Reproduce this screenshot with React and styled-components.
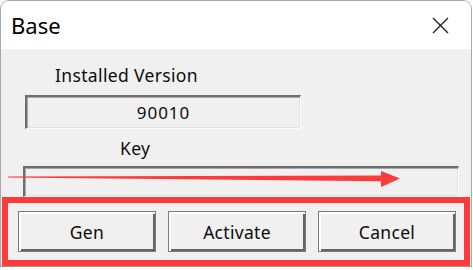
import React from "react";
import styled, { createGlobalStyle } from "styled-components";

const Global = createGlobalStyle`
  html, body { margin: 0; padding: 0; }
  body {
    width: 473px;
    height: 270px;
    overflow: hidden;
    background: #ffffff;
    font-family: "Noto Sans", "Liberation Sans", sans-serif;
  }
`;

const Window = styled.div`
  position: relative;
  width: 472px;
  box-sizing: border-box;
  border: 1.5px solid #a9a9a9;
  border-bottom: 1px solid #9a9a9a;
  border-radius: 9px 9px 0 0;
  overflow: hidden;
  background: #f0f0f0;
`;

const TitleBar = styled.div`
  height: 48px;
  background: #ffffff;
  display: flex;
  align-items: center;
  justify-content: space-between;
  padding: 0 22px 0 10px;
`;

const Title = styled.span`
  font-size: 22px;
  line-height: 28px;
  color: #000;
`;

const Body = styled.div`
  display: flex;
  flex-direction: column;
  padding-top: 16px;
`;

const Label = styled.div`
  font-size: 17.5px;
  line-height: 20px;
  color: #0d0d0d;
  letter-spacing: 0.35px;
  margin-left: ${(p) => p.$left}px;
  margin-top: ${(p) => p.$top || 0}px;
`;

const Sunken = styled.div`
  box-sizing: border-box;
  margin-left: ${(p) => p.$left}px;
  margin-top: ${(p) => p.$top}px;
  width: ${(p) => p.$width}px;
  height: ${(p) => p.$height}px;
  border-style: solid;
  border-width: 2px 1.5px 1.5px 2px;
  border-color: #6e6e6e #fbfbfb #fbfbfb #6e6e6e;
  box-shadow: inset 1px 1px 0 #a8a8a8, inset -1px -1px 0 #e2e2e2;
  background: #f0f0f0;
  display: flex;
  align-items: center;
  justify-content: center;
  font-size: 17px;
  letter-spacing: 1px;
  color: #0d0d0d;
`;

const ButtonBar = styled.div`
  margin: 0 1px;
  border: 6px solid #fd3a3a;
  display: flex;
  gap: 12px;
  padding: 8px 7px 8px 10px;
`;

const Button = styled.button`
  box-sizing: border-box;
  width: 138px;
  height: 41px;
  background: #f0f0f0;
  border: 1px solid #7a7a7a;
  box-shadow: inset 2px 2px 0 #ffffff, inset -2px -2px 0 #646464;
  font-family: "Noto Sans", "Liberation Sans", sans-serif;
  font-size: 17.5px;
  letter-spacing: 0.3px;
  color: #0d0d0d;
  padding: 0;
  display: flex;
  align-items: center;
  justify-content: center;
`;

const Arrow = styled.svg`
  position: absolute;
  left: 0;
  top: 0;
  pointer-events: none;
`;

export default function App() {
  return (
    <>
      <Global />
      <Window>
        <TitleBar>
          <Title>Base</Title>
          <svg width="17" height="17" viewBox="0 0 17 17">
            <path d="M1 1 L16 16 M16 1 L1 16" stroke="#222" strokeWidth="1.4" />
          </svg>
        </TitleBar>
        <Body>
          <Label $left={54}>Installed Version</Label>
          <Sunken $left={24} $top={10} $width={276} $height={34}>90010</Sunken>
          <Label $left={119} $top={9}>Key</Label>
          <Sunken $left={22} $top={8} $width={436} $height={31} />
          <ButtonBar>
            <Button>Gen</Button>
            <Button>Activate</Button>
            <Button>Cancel</Button>
          </ButtonBar>
        </Body>
        <Arrow width="472" height="270" viewBox="0 0 472 270">
          <polygon points="7,175.4 382,174.4 382,180.2 7,176.4" fill="#fd3a3a" />
          <polygon points="380,170 399,177.6 380,186" fill="#fd3a3a" />
        </Arrow>
      </Window>
    </>
  );
}
